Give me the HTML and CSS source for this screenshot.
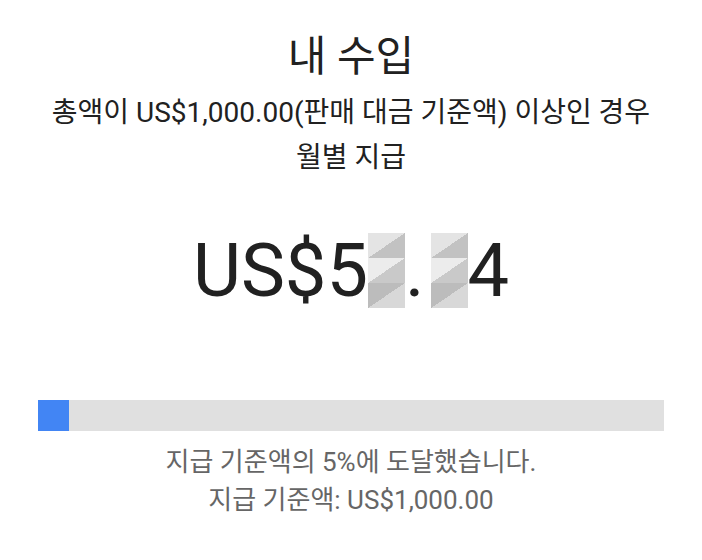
FILE: index.html
```html
<!DOCTYPE html>
<html lang="ko">
<head>
    <meta charset="UTF-8">
    <meta name="viewport" content="width=device-width, initial-scale=1.0">
    <title>내 수입</title>
    <link rel="stylesheet" href="styles.css">
</head>
<body>
    <div class="container">
        <h1 class="title">내 수입</h1>
        <p class="subtitle">총액이 US$1,000.00(판매 대금 기준액) 이상인 경우<br>월별 지급</p>

        <div class="amount">US$5<span class="hidden"></span>.<span class="hidden hidden-last"></span>4</div>

        <div class="progress">
            <div class="progress-fill" style="width: 5%"></div>
        </div>

        <p class="note">지급 기준액의 5%에 도달했습니다.<br>지급 기준액: US$1,000.00</p>
    </div>
</body>
</html>
```

FILE: styles.css
```css
body {
    margin: 0;
    background-color: #fff;
    font-family: Roboto, "Noto Sans CJK KR", sans-serif;
    color: #212121;
}

.container {
    display: flex;
    flex-direction: column;
    align-items: stretch;
    padding: 30px 38px 0 38px;
}

.title {
    margin: 0;
    text-align: center;
    font-size: 42px;
    font-weight: 400;
    line-height: 54px;
}

.subtitle {
    margin: 6px -20px 0 -20px;
    text-align: center;
    font-size: 28px;
    line-height: 45px;
    color: #212121;
}

.amount {
    margin-top: 46px;
    text-align: center;
    font-size: 74px;
    line-height: 90px;
    color: #212121;
}

/* 가려진 숫자 (모자이크) */
.hidden {
    display: inline-block;
    width: 37px;
    height: 75px;
    vertical-align: -12px;
    background-color: #d6d6d6;
    background-image:
        linear-gradient(to bottom right, #e4e4e4 50%, #c2c2c2 50%),
        linear-gradient(to bottom right, #ececec 50%, #c9c9c9 50%),
        linear-gradient(to bottom right, #bcbcbc 50%, #d8d8d8 50%);
    background-size: 100% 25px;
    background-position: 0 0, 0 25px, 0 50px;
    background-repeat: no-repeat;
}

.hidden-last {
    margin-left: 6px;
}

.progress {
    margin-top: 84px;
    height: 31px;
    background-color: #e0e0e0;
    display: flex;
}

.progress-fill {
    background-color: #4285f4;
}

.note {
    margin: 12px -20px 0 -20px;
    text-align: center;
    font-size: 26px;
    line-height: 38px;
    color: #666;
}
```
